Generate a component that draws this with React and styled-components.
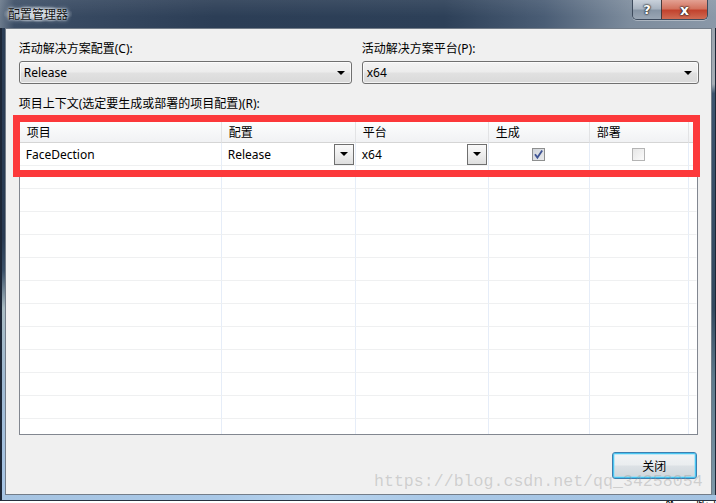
import React from "react";
import styled, { createGlobalStyle } from "styled-components";

const Global = createGlobalStyle`
  html, body { margin: 0; padding: 0; background: #ffffff; }
  body { width: 716px; height: 503px; overflow: hidden; }
  * { box-sizing: border-box; }
`;

const Page = styled.div`
  position: relative;
  width: 716px;
  height: 503px;
  overflow: hidden;
  font-family: "Noto Sans", "Noto Sans CJK SC", sans-serif;
  font-size: 12px;
  color: #000;
  display: flex;
  flex-direction: column;
`;

const Window = styled.div`
  display: flex;
  flex-direction: column;
  height: 501px;
  background: #2c3e56;
`;

const TitleBar = styled.div`
  height: 28px;
  display: flex;
  align-items: flex-start;
  padding-right: 8px;
  background:
    linear-gradient(180deg, rgba(255,255,255,0.08) 0%, rgba(255,255,255,0) 60%),
    linear-gradient(90deg, #6b7a8c 0%, #3c4e66 2%, #2c3e56 30%, #2d4058 62%, #4a5d75 76%, #7d8c9d 88%, #8a98a8 100%);
`;

const Title = styled.div`
  margin-top: 6px;
  margin-left: 4px;
  padding: 0 4px;
  line-height: 16px;
  font-family: "Noto Sans CJK SC", sans-serif;
  font-size: 12px;
  color: #111;
  background: radial-gradient(ellipse at center, rgba(220,226,234,0.85) 30%, rgba(220,226,234,0) 75%);
  text-shadow: 0 0 4px #e8eef4, 0 0 2px #e8eef4;
`;

const Spacer = styled.div`
  flex: 1;
`;

const CaptionButtons = styled.div`
  display: flex;
  height: 20px;
  border: 1px solid #3d4a5c;
  border-top: none;
  border-radius: 0 0 5px 5px;
  overflow: hidden;
  box-shadow: 0 1px 0 rgba(255,255,255,0.35);
`;

const CaptionButton = styled.div`
  width: ${(p) => p.$w}px;
  height: 19px;
  display: flex;
  align-items: center;
  justify-content: center;
  font-family: "DejaVu Sans", sans-serif;
  font-weight: bold;
  font-size: ${(p) => (p.$close ? 14 : 13)}px;
  color: #fff;
  text-shadow: 0 0 1px #222, 0 0 2px #222, 0 0 2px #333;
  background: ${(p) =>
    p.$close
      ? "linear-gradient(180deg, #e3a193 0%, #d3735f 45%, #c2432e 55%, #d06c54 100%)"
      : "linear-gradient(180deg, #c9d1db 0%, #a9b4c1 45%, #8795a5 55%, #9aa6b4 100%)"};
  border-left: ${(p) => (p.$close ? "1px solid #4a3a3a" : "none")};
`;

const Middle = styled.div`
  flex: 1;
  display: flex;
`;

const SideFrame = styled.div`
  width: 7px;
  background: ${(p) =>
    p.$right
      ? "linear-gradient(180deg, #9aa3ad 0%, #a6aeb6 12%, #3d546e 14%, #33495f 60%, #5e7a8c 75%, #7e98a8 100%)"
      : "linear-gradient(180deg, #2b3d55 0%, #283a52 45%, #3a5068 52%, #a9bcc4 60%, #9fb9d2 75%, #a8c6e6 100%)"};
  border-left: ${(p) => (p.$right ? "none" : "2px solid #1c2636")};
  border-right: ${(p) => (p.$right ? "1px solid #1c2636" : "none")};
`;

const Client = styled.div`
  flex: 1;
  display: flex;
  flex-direction: column;
  background: #f0f0f0;
  border: 1px solid #737d89;
  padding: 12px 12px 0 13px;
`;

const TopRow = styled.div`
  display: grid;
  grid-template-columns: 333px 1fr;
  column-gap: 10px;
`;

const Field = styled.div`
  display: flex;
  flex-direction: column;
`;

const Label = styled.div`
  line-height: 16px;
  height: 16px;
  white-space: nowrap;
  margin-top: ${(p) => p.$mt || 0}px;
`;

const Combo = styled.div`
  margin-top: 4px;
  height: 23px;
  border: 1px solid #707070;
  border-radius: 3px;
  background: linear-gradient(180deg, #f3f3f3 0%, #ececec 48%, #e1e1e1 52%, #d9d9d9 100%);
  display: flex;
  align-items: center;
  padding: 0 0 0 4px;
  box-shadow: inset 0 0 0 1px rgba(255,255,255,0.7);
`;

const ComboText = styled.span`
  flex: 1;
  line-height: 21px;
`;

const Arrow = styled.span`
  width: 0;
  height: 0;
  border-left: 4px solid transparent;
  border-right: 4px solid transparent;
  border-top: 4px solid #000;
  margin-right: ${(p) => p.$mr ?? 6}px;
`;

const Grid = styled.div`
  margin-top: 7px;
  margin-right: 1px;
  height: 316px;
  border: 1px solid #828790;
  background: #fff;
  overflow: hidden;
  display: grid;
  grid-template-columns: 202px 134px 133px 101px 99px 1fr;
  grid-auto-rows: 23px;
`;

const HeadCell = styled.div`
  height: 23px;
  display: flex;
  align-items: center;
  padding-left: 7px;
  background: linear-gradient(180deg, #ffffff 0%, #f7f8f9 50%, #f1f2f4 100%);
  border-bottom: 1px solid #d5d5d5;
  border-right: 1px solid ${(p) => (p.$last ? "transparent" : "#e2e3e5")};
  font-family: "Noto Sans CJK SC", sans-serif;
`;

const Cell = styled.div`
  height: 23px;
  display: flex;
  align-items: center;
  justify-content: ${(p) => (p.$center ? "center" : "flex-start")};
  padding-left: ${(p) => (p.$center ? 0 : 6)}px;
  border-bottom: 1px solid #eff0f1;
  border-right: 1px solid ${(p) => (p.$last ? "transparent" : "#e6edf8")};
`;

const CellText = styled.span`
  flex: ${(p) => (p.$grow ? 1 : "none")};
`;

const DropButton = styled.div`
  width: 20px;
  height: 21px;
  margin-right: 1px;
  border: 1px solid #6f6f6f;
  background: linear-gradient(180deg, #fafafa 0%, #eeeeee 50%, #dedede 100%);
  display: flex;
  align-items: center;
  justify-content: center;
`;

const Check = styled.div`
  width: 13px;
  height: 13px;
  border: 1px solid ${(p) => (p.$checked ? "#8e8f8f" : "#b4b4b4")};
  background: ${(p) =>
    p.$checked
      ? "linear-gradient(135deg, #d0d4da 0%, #e9eaec 100%)"
      : "linear-gradient(135deg, #e6e6e6 0%, #fbfbfb 100%)"};
  display: flex;
  align-items: center;
  justify-content: center;
  margin-top: 1px;
`;

const Footer = styled.div`
  display: flex;
  justify-content: flex-end;
  padding-top: 17px;
  padding-right: 2px;
`;

const CloseButton = styled.div`
  width: 85px;
  height: 27px;
  border: 1px solid #3c7fb1;
  border-radius: 3px;
  box-shadow: inset 0 0 0 1px #48c5f0, inset 0 0 0 2px rgba(140,220,250,0.5);
  background: linear-gradient(180deg, #f2f4f5 0%, #eaedef 48%, #dce1e5 52%, #cfd6db 100%);
  display: flex;
  align-items: center;
  justify-content: center;
  font-family: "Noto Sans CJK SC", sans-serif;
`;

const BottomFrame = styled.div`
  height: 6px;
  background: linear-gradient(90deg, #a6c4e2 0%, #a9c8e7 30%, #b8d4ee 45%, #a9c8e7 60%, #a4c3e2 100%);
  border-bottom: 1px solid #26303e;
  border-left: 2px solid #1c2636;
`;

const Below = styled.div`
  flex: 1;
  background: #fff;
  position: relative;
  overflow: hidden;
`;

const Fragment = styled.span`
  position: absolute;
  left: 664px;
  top: -9px;
  font-family: "Noto Sans CJK SC", sans-serif;
  font-size: 12px;
  color: #000;
  letter-spacing: 4px;
  white-space: nowrap;
`;

const Highlight = styled.div`
  position: absolute;
  left: 13px;
  top: 115px;
  width: 687px;
  height: 62px;
  border: 7px solid #fc393b;
  pointer-events: none;
`;

const Watermark = styled.div`
  position: absolute;
  left: 374px;
  top: 472px;
  font-family: "Liberation Mono", monospace;
  font-size: 16.6px;
  line-height: 20px;
  color: rgba(150, 150, 150, 0.38);
  white-space: nowrap;
  pointer-events: none;
`;

const columns = ["项目", "配置", "平台", "生成", "部署", ""];

const CheckMark = () => (
  <svg width="11" height="11" viewBox="0 0 11 11">
    <path d="M2 5.2 L4.4 8.6 L9.2 1.4" fill="none" stroke="#3f5494" strokeWidth="1.8" />
  </svg>
);

export default function App() {
  const emptyRows = Array.from({ length: 12 });
  return (
    <Page>
      <Global />
      <Window>
        <TitleBar>
          <Title>配置管理器</Title>
          <Spacer />
          <CaptionButtons>
            <CaptionButton $w={28}>?</CaptionButton>
            <CaptionButton $w={46} $close>x</CaptionButton>
          </CaptionButtons>
        </TitleBar>
        <Middle>
          <SideFrame />
          <Client>
            <TopRow>
              <Field>
                <Label>活动解决方案配置(C):</Label>
                <Combo>
                  <ComboText>Release</ComboText>
                  <Arrow />
                </Combo>
              </Field>
              <Field>
                <Label>活动解决方案平台(P):</Label>
                <Combo>
                  <ComboText>x64</ComboText>
                  <Arrow />
                </Combo>
              </Field>
            </TopRow>
            <Label $mt={12}>项目上下文(选定要生成或部署的项目配置)(R):</Label>
            <Grid>
              {columns.map((c, i) => (
                <HeadCell key={i} $last={i === columns.length - 1}>{c}</HeadCell>
              ))}
              <Cell><CellText>FaceDection</CellText></Cell>
              <Cell>
                <CellText $grow>Release</CellText>
                <DropButton><Arrow $mr={0} /></DropButton>
              </Cell>
              <Cell>
                <CellText $grow>x64</CellText>
                <DropButton><Arrow $mr={0} /></DropButton>
              </Cell>
              <Cell $center><Check $checked><CheckMark /></Check></Cell>
              <Cell $center><Check /></Cell>
              <Cell $last />
              {emptyRows.map((_, r) =>
                columns.map((_, i) => (
                  <Cell key={`${r}-${i}`} $last={i === columns.length - 1} />
                ))
              )}
            </Grid>
            <Footer>
              <CloseButton>关闭</CloseButton>
            </Footer>
          </Client>
          <SideFrame $right />
        </Middle>
        <BottomFrame />
      </Window>
      <Below>
        <Fragment>从一起运</Fragment>
      </Below>
      <Highlight />
      <Watermark>https://blog.csdn.net/qq_34258054</Watermark>
    </Page>
  );
}
